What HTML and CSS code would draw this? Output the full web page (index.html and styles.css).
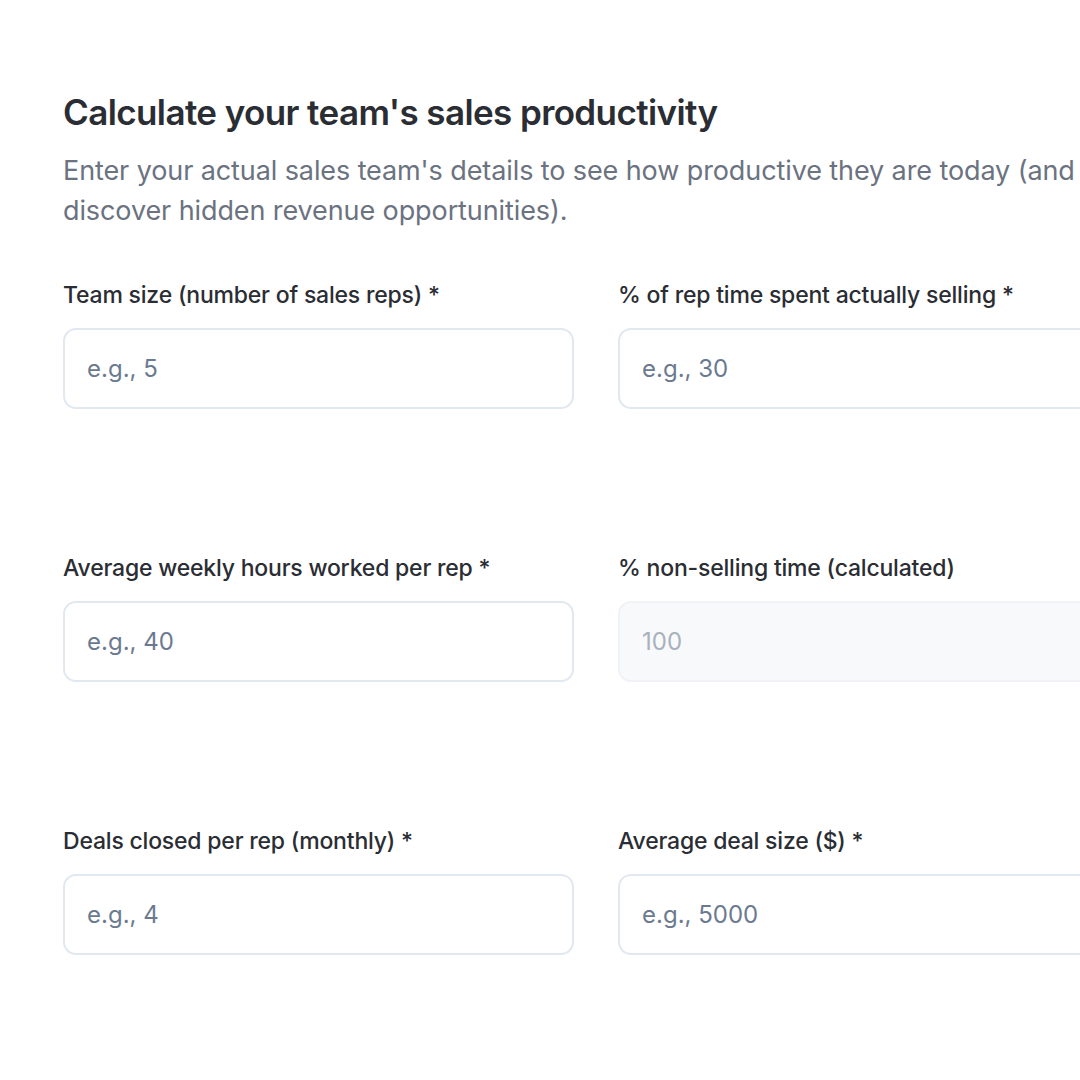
FILE: index.html
```html
<!DOCTYPE html>
<html lang="en">
<head>
  <meta charset="UTF-8" />
  <meta name="viewport" content="width=device-width, initial-scale=1" />
  <title>Sales productivity calculator</title>
  <link rel="stylesheet" href="styles.css">
</head>
<body>
  <main class="calculator">
    <h2 class="calc-title">Calculate your team's sales productivity</h2>
    <p class="calc-intro">Enter your actual sales team's details to see how productive they are today (and discover hidden revenue opportunities).</p>

    <form class="calc-form">
      <div class="field">
        <label for="team-size">Team size (number of sales reps) *</label>
        <input id="team-size" type="number" placeholder="e.g., 5">
      </div>
      <div class="field">
        <label for="selling-pct">% of rep time spent actually selling *</label>
        <input id="selling-pct" type="number" placeholder="e.g., 30">
      </div>
      <div class="field">
        <label for="weekly-hours">Average weekly hours worked per rep *</label>
        <input id="weekly-hours" type="number" placeholder="e.g., 40">
      </div>
      <div class="field">
        <label for="non-selling">% non-selling time (calculated)</label>
        <input id="non-selling" type="text" value="100" disabled>
      </div>
      <div class="field">
        <label for="deals">Deals closed per rep (monthly) *</label>
        <input id="deals" type="number" placeholder="e.g., 4">
      </div>
      <div class="field">
        <label for="deal-size">Average deal size ($) *</label>
        <input id="deal-size" type="number" placeholder="e.g., 5000">
      </div>
    </form>
  </main>
</body>
</html>
```

FILE: styles.css
```css
html, body {
  margin: 0;
  background: #fff;
  overflow: hidden;
}
body {
  font-family: Inter, "Noto Sans", sans-serif;
  color: #2a2d33;
  width: 1080px;
  height: 1080px;
}
.calculator {
  width: 1066px;
  padding: 91px 0 0 63px;
}
.calc-title {
  margin: 0;
  font-size: 35px;
  font-weight: 600;
  letter-spacing: -0.6px;
  line-height: 42px;
}
.calc-intro {
  margin: 18px 0 0;
  font-size: 27px;
  line-height: 40px;
  color: #6b7280;
  letter-spacing: -0.1px;
}
.calc-form {
  display: grid;
  grid-template-columns: 511px 511px;
  column-gap: 44px;
  row-gap: 144px;
  margin-top: 49px;
}
.field {
  display: flex;
  flex-direction: column;
}
.field label {
  font-size: 23px;
  font-weight: 500;
  line-height: 30px;
  letter-spacing: -0.2px;
  margin-bottom: 18px;
}
.field input {
  box-sizing: border-box;
  height: 81px;
  border: 2px solid #e2e8f0;
  border-radius: 13px;
  padding: 0 22px;
  font-family: inherit;
  font-size: 24px;
  color: #2a2d33;
  background: #fff;
  outline: none;
}
.field input::placeholder {
  color: #6b7a90;
}
.field input:disabled {
  background: #f8f9fb;
  border-color: #f0f2f5;
  color: #a9b1bd;
}
```
